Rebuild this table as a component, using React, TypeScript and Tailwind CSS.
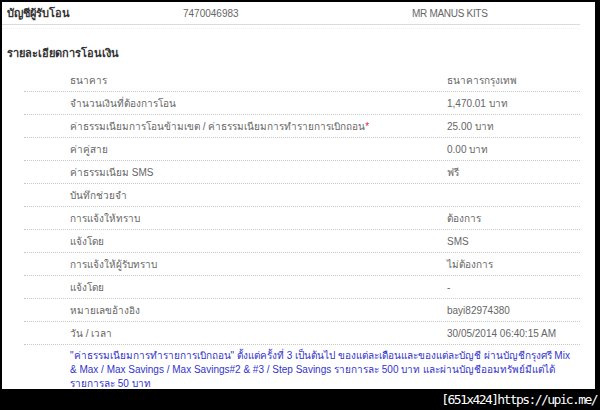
import React from "react";

const rows: { label: React.ReactNode; value: string }[] = [
  { label: "ธนาคาร", value: "ธนาคารกรุงเทพ" },
  { label: "จำนวนเงินที่ต้องการโอน", value: "1,470.01 บาท" },
  {
    label: (
      <>
        ค่าธรรมเนียมการโอนข้ามเขต / ค่าธรรมเนียมการทำรายการเบิกถอน
        <span className="text-[#e0245e]">*</span>
      </>
    ),
    value: "25.00 บาท",
  },
  { label: "ค่าคู่สาย", value: "0.00 บาท" },
  { label: "ค่าธรรมเนียม SMS", value: "ฟรี" },
  { label: "บันทึกช่วยจำ", value: "" },
  { label: "การแจ้งให้ทราบ", value: "ต้องการ" },
  { label: "แจ้งโดย", value: "SMS" },
  { label: "การแจ้งให้ผู้รับทราบ", value: "ไม่ต้องการ" },
  { label: "แจ้งโดย", value: "-" },
  { label: "หมายเลขอ้างอิง", value: "bayi82974380" },
  { label: "วัน / เวลา", value: "30/05/2014 06:40:15 AM" },
];

export default function App() {
  return (
    <div className="w-[600px] h-[410px] bg-black flex flex-col overflow-hidden">
      <div
        className="ml-[2px] mt-[2px] w-[593px] h-[387px] bg-white text-[10px] text-[#666]"
        style={{ fontFamily: '"Liberation Sans", "Noto Sans", "DejaVu Sans", sans-serif' }}
      >
        <div className="w-[578px] h-[23px] flex items-center border-b border-[#dcdcdc]">
          <div className="w-[181px] pl-[5px] text-[11px] font-bold text-[#333]">บัญชีผู้รับโอน</div>
          <div className="w-[229px]">7470046983</div>
          <div className="tracking-[-0.3px]">MR MANUS KITS</div>
        </div>
        <div className="w-[578px] h-[4px] border-b border-dotted border-[#f0f0f0]"></div>
        <div className="mt-[13px] h-[22px] flex items-center pl-[5px] text-[11px] font-bold text-[#333]">
          รายละเอียดการโอนเงิน
        </div>
        <div className="mt-[5px] ml-[22px] w-[556px]">
          {rows.map((r, i) => (
            <div
              key={i}
              className="h-[23px] flex items-center border-b border-dotted border-[#c8c8c8]"
            >
              <div className="w-[423px] pl-[46px]">{r.label}</div>
              <div>{r.value}</div>
            </div>
          ))}
          <div className="pt-[4px] pl-[46px] pr-[10px] leading-[14px] text-[#3333cc]">
            "ค่าธรรมเนียมการทำรายการเบิกถอน" ตั้งแต่ครั้งที่ 3 เป็นต้นไป ของแต่ละเดือนและของแต่ละบัญชี ผ่านบัญชีกรุงศรี Mix
            <br />
            &amp; Max / Max Savings / Max Savings#2 &amp; #3 / Step Savings รายการละ 500 บาท และผ่านบัญชีออมทรัพย์มีแต่ได้
            <br />
            รายการละ 50 บาท
          </div>
        </div>
      </div>
      <div className="flex-1 flex items-center justify-end pr-[3px]">
        <span
          className="text-white text-[13px] tracking-[-1.6px]"
          style={{ fontFamily: '"DejaVu Sans Mono", monospace' }}
        >
          [651x424]https://upic.me/
        </span>
      </div>
    </div>
  );
}
